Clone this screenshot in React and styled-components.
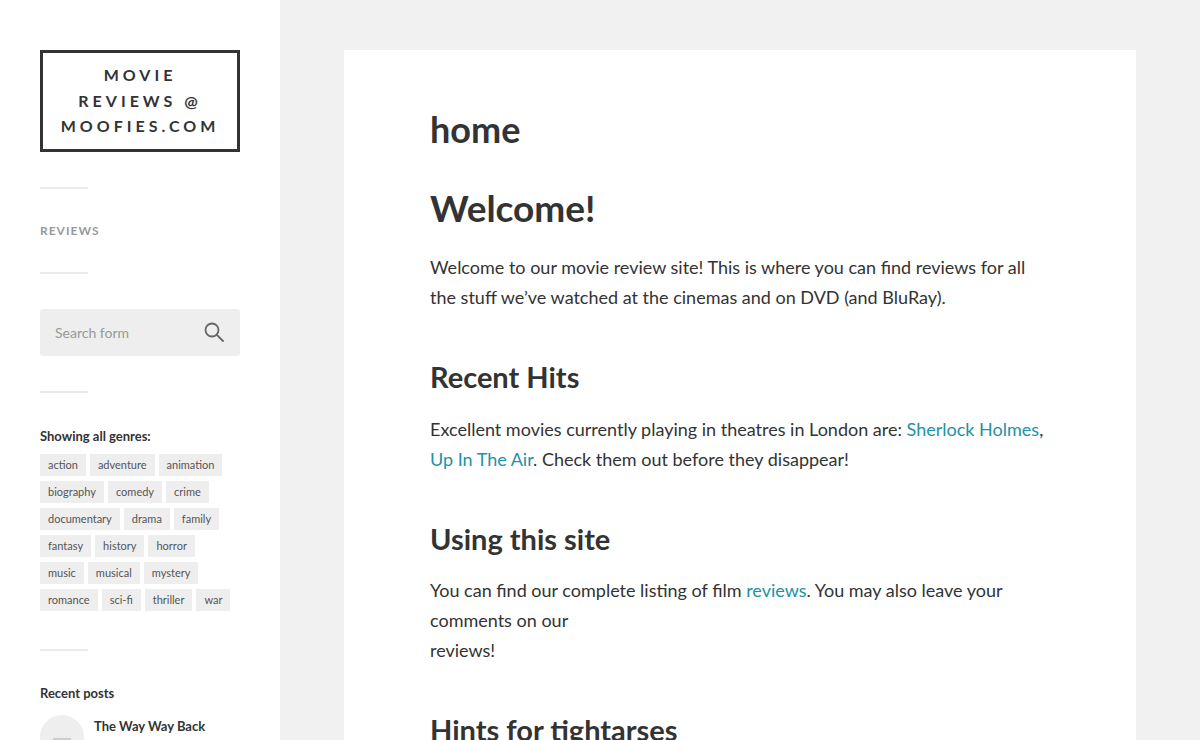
import React from "react";
import styled, { createGlobalStyle } from "styled-components";

const Global = createGlobalStyle`
  html, body { margin: 0; padding: 0; background: #f1f1f1; }
  body { font-family: Lato, "Open Sans", sans-serif; color: #333; overflow: hidden; }
  * { box-sizing: border-box; }
`;

const Page = styled.div`
  display: flex;
  height: 740px;
  overflow: hidden;
`;

const Sidebar = styled.aside`
  width: 280px;
  flex-shrink: 0;
  background: #fff;
  padding: 50px 40px 0;
`;

const Logo = styled.div`
  width: 200px;
  border: 3px solid #333;
  padding: 9px 0 10px;
  text-align: center;
  font-size: 16px;
  font-weight: 700;
  line-height: 25.5px;
  letter-spacing: 4px;
  text-transform: uppercase;
  color: #333;
`;

const Divider = styled.hr`
  width: 48px;
  height: 2px;
  border: 0;
  background: #eaeaea;
  margin: ${p => p.$m || "35px 0"};
`;

const NavLink = styled.div`
  font-size: 12px;
  font-weight: 700;
  letter-spacing: 1px;
  color: #999;
  text-transform: uppercase;
  line-height: 14px;
`;

const Search = styled.div`
  width: 200px;
  height: 47px;
  background: #eee;
  border-radius: 3px;
  display: flex;
  align-items: center;
  justify-content: space-between;
  padding: 0 16px 0 15px;
  font-size: 14px;
  color: #999;
`;

const WidgetTitle = styled.div`
  font-size: 13px;
  font-weight: 700;
  color: #333;
  margin-bottom: ${p => p.$mb || "10px"};
`;

const Tags = styled.div`
  display: flex;
  flex-wrap: wrap;
  gap: 5px 4px;
`;

const Tag = styled.span`
  background: #eee;
  color: #555;
  font-size: 11px;
  height: 22px;
  line-height: 22px;
  padding: 0 8px;
`;

const Post = styled.div`
  display: flex;
  gap: 10px;
`;

const Avatar = styled.div`
  width: 44px;
  height: 44px;
  border-radius: 50%;
  background: #eee;
  flex-shrink: 0;
  display: flex;
  align-items: center;
  justify-content: center;
`;

const PostTitle = styled.div`
  font-size: 13px;
  font-weight: 700;
  padding-top: 3px;
`;

const Main = styled.main`
  flex: 1;
  padding: 50px 64px 0;
`;

const Card = styled.article`
  background: #fff;
  padding: 56px 86px 0;
  height: 800px;
`;

const H1 = styled.h1`
  font-size: 36px;
  font-weight: 700;
  margin: 0 0 32px;
  line-height: 46px;
`;

const H2 = styled.h2`
  font-size: ${p => p.$size || "29px"};
  font-weight: 700;
  margin: 0 0 ${p => p.$mb || "18px"};
  line-height: 1.3;
`;

const P = styled.p`
  font-size: 18px;
  line-height: 30px;
  margin: 0 0 ${p => p.$mb || "46px"};
  color: #333;
`;

const A = styled.a`
  color: #2191a8;
  text-decoration: none;
`;

const genres = [
  "action", "adventure", "animation", "biography", "comedy", "crime",
  "documentary", "drama", "family", "fantasy", "history", "horror",
  "music", "musical", "mystery", "romance", "sci-fi", "thriller", "war",
];

export default function App() {
  return (
    <>
      <Global />
      <Page>
        <Sidebar>
          <Logo>Movie<br />Reviews @<br />Moofies.com</Logo>
          <Divider />
          <NavLink>Reviews</NavLink>
          <Divider $m="34px 0 35px" />
          <Search>
            <span>Search form</span>
            <svg width="20" height="20" viewBox="0 0 20 20" fill="none" stroke="#666" strokeWidth="1.8">
              <circle cx="8" cy="8" r="6.5" />
              <path d="M12.8 12.8 L19 19" strokeLinecap="round" />
            </svg>
          </Search>
          <Divider $m="35px 0 35px" />
          <WidgetTitle>Showing all genres:</WidgetTitle>
          <Tags>
            {genres.map(g => <Tag key={g}>{g}</Tag>)}
          </Tags>
          <Divider $m="38px 0 34px" />
          <WidgetTitle $mb="14px">Recent posts</WidgetTitle>
          <Post>
            <Avatar>
              <svg width="18" height="14" viewBox="0 0 18 14" fill="#ccc">
                <rect x="0" y="8" width="18" height="2" />
                <rect x="0" y="12" width="14" height="2" />
              </svg>
            </Avatar>
            <PostTitle>The Way Way Back</PostTitle>
          </Post>
        </Sidebar>
        <Main>
          <Card>
            <H1>home</H1>
            <H2 $size="37px" $mb="20px">Welcome!</H2>
            <P>
              Welcome to our movie review site! This is where you can find reviews for all the
              stuff we’ve watched at the cinemas and on DVD (and BluRay).
            </P>
            <H2>Recent Hits</H2>
            <P>
              Excellent movies currently playing in theatres in London are: <A href="#">Sherlock Holmes</A>,{" "}
              <A href="#">Up In The Air</A>. Check them out before they disappear!
            </P>
            <H2>Using this site</H2>
            <P>
              You can find our complete listing of film <A href="#">reviews</A>. You may also leave your
              comments on our<br />reviews!
            </P>
            <H2>Hints for tightarses</H2>
          </Card>
        </Main>
      </Page>
    </>
  );
}
